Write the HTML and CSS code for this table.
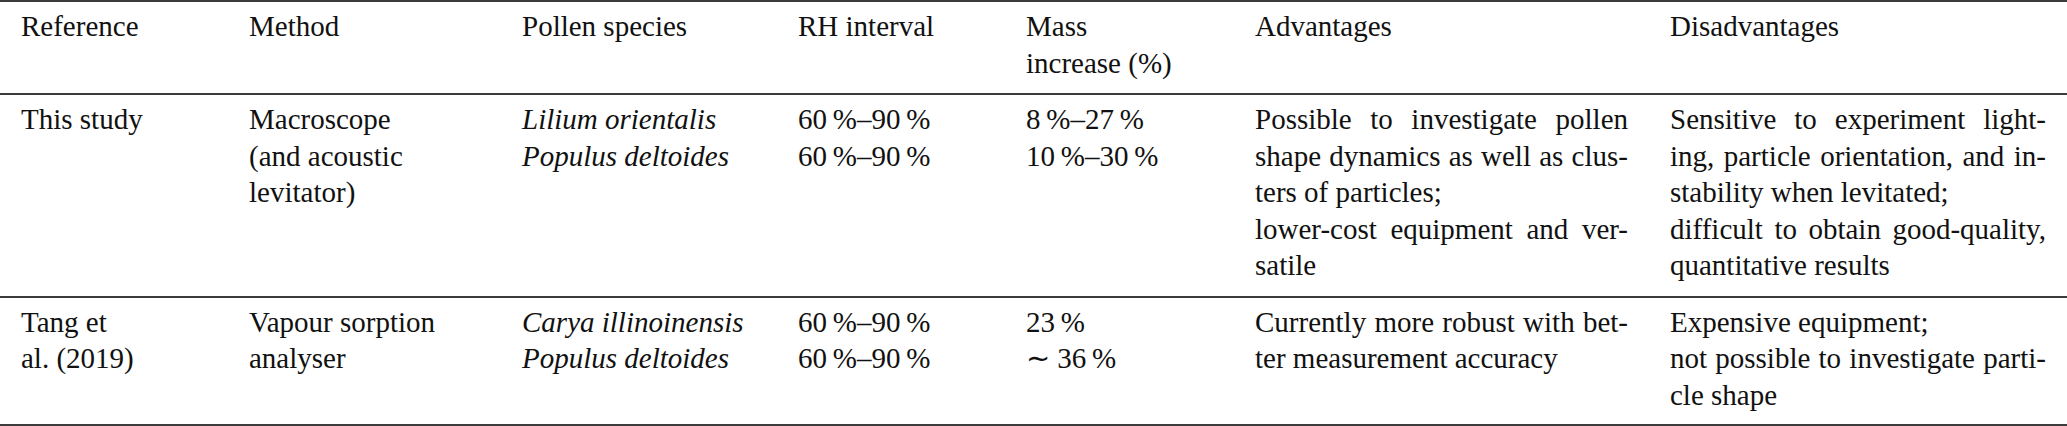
FILE: index.html
```html
<!DOCTYPE html>
<html lang="en">
<head>
<meta charset="utf-8">
<title>Comparison of methods</title>
<link rel="stylesheet" href="styles.css">
</head>
<body>
<table class="cmp">
  <thead>
    <tr>
      <th class="c-ref">Reference</th>
      <th class="c-meth">Method</th>
      <th class="c-pol">Pollen species</th>
      <th class="c-rh">RH interval</th>
      <th class="c-mass">Mass<br>increase (%)</th>
      <th class="c-adv">Advantages</th>
      <th class="c-dis">Disadvantages</th>
    </tr>
  </thead>
  <tbody>
    <tr>
      <td>This study</td>
      <td>Macroscope<br>(and acoustic<br>levitator)</td>
      <td><i>Lilium orientalis</i><br><i>Populus deltoides</i></td>
      <td>60&thinsp;%–90&thinsp;%<br>60&thinsp;%–90&thinsp;%</td>
      <td>8&thinsp;%–27&thinsp;%<br>10&thinsp;%–30&thinsp;%</td>
      <td>
        <span class="j">Possible to investigate pollen</span>
        <span class="j">shape dynamics as well as clus-</span>
        <span class="l">ters of particles;</span>
        <span class="j">lower-cost equipment and ver-</span>
        <span class="l">satile</span>
      </td>
      <td>
        <span class="j">Sensitive to experiment light-</span>
        <span class="j">ing, particle orientation, and in-</span>
        <span class="l">stability when levitated;</span>
        <span class="j">difficult to obtain good-quality,</span>
        <span class="l">quantitative results</span>
      </td>
    </tr>
    <tr>
      <td>Tang et<br>al. (2019)</td>
      <td>Vapour sorption<br>analyser</td>
      <td><i>Carya illinoinensis</i><br><i>Populus deltoides</i></td>
      <td>60&thinsp;%–90&thinsp;%<br>60&thinsp;%–90&thinsp;%</td>
      <td>23&thinsp;%<br>∼&#8197;36&thinsp;%</td>
      <td>
        <span class="j">Currently more robust with bet-</span>
        <span class="l">ter measurement accuracy</span>
      </td>
      <td>
        <span class="l">Expensive equipment;</span>
        <span class="j">not possible to investigate parti-</span>
        <span class="l">cle shape</span>
      </td>
    </tr>
  </tbody>
</table>
</body>
</html>
```
FILE: styles.css
```css
html, body {
  margin: 0;
  padding: 0;
  background: #ffffff;
  font-family: "Liberation Serif", Tinos, serif;
}

.cmp {
  width: 2067px;
  border-collapse: collapse;
  table-layout: fixed;
  font-family: "Liberation Serif", Tinos, serif;
  font-size: 29px;
  line-height: 36.5px;
  color: #111111;
  border-top: 2px solid #3c3c3c;
  border-bottom: 2px solid #3c3c3c;
}

.cmp th,
.cmp td {
  font-family: "Liberation Serif", Tinos, serif;
  text-align: left;
  font-weight: normal;
  vertical-align: top;
  padding: 6px 21px 12px 21px;
  white-space: nowrap;
}

.cmp thead th {
  border-bottom: 2px solid #3c3c3c;
}

.cmp tbody tr + tr td {
  border-top: 2px solid #3c3c3c;
}

.cmp tbody tr:last-child td {
  padding-bottom: 11px;
}

.c-ref { width: 186px; }
.c-meth { width: 231px; }
.c-pol { width: 234px; }
.c-rh { width: 186px; }
.c-mass { width: 187px; }
.c-adv { width: 373px; }
.c-dis { width: 376px; }

.cmp i {
  font-style: italic;
}

.j,
.l {
  display: block;
}

.j {
  text-align: justify;
  text-align-last: justify;
}

.l {
  text-align: left;
}
```
